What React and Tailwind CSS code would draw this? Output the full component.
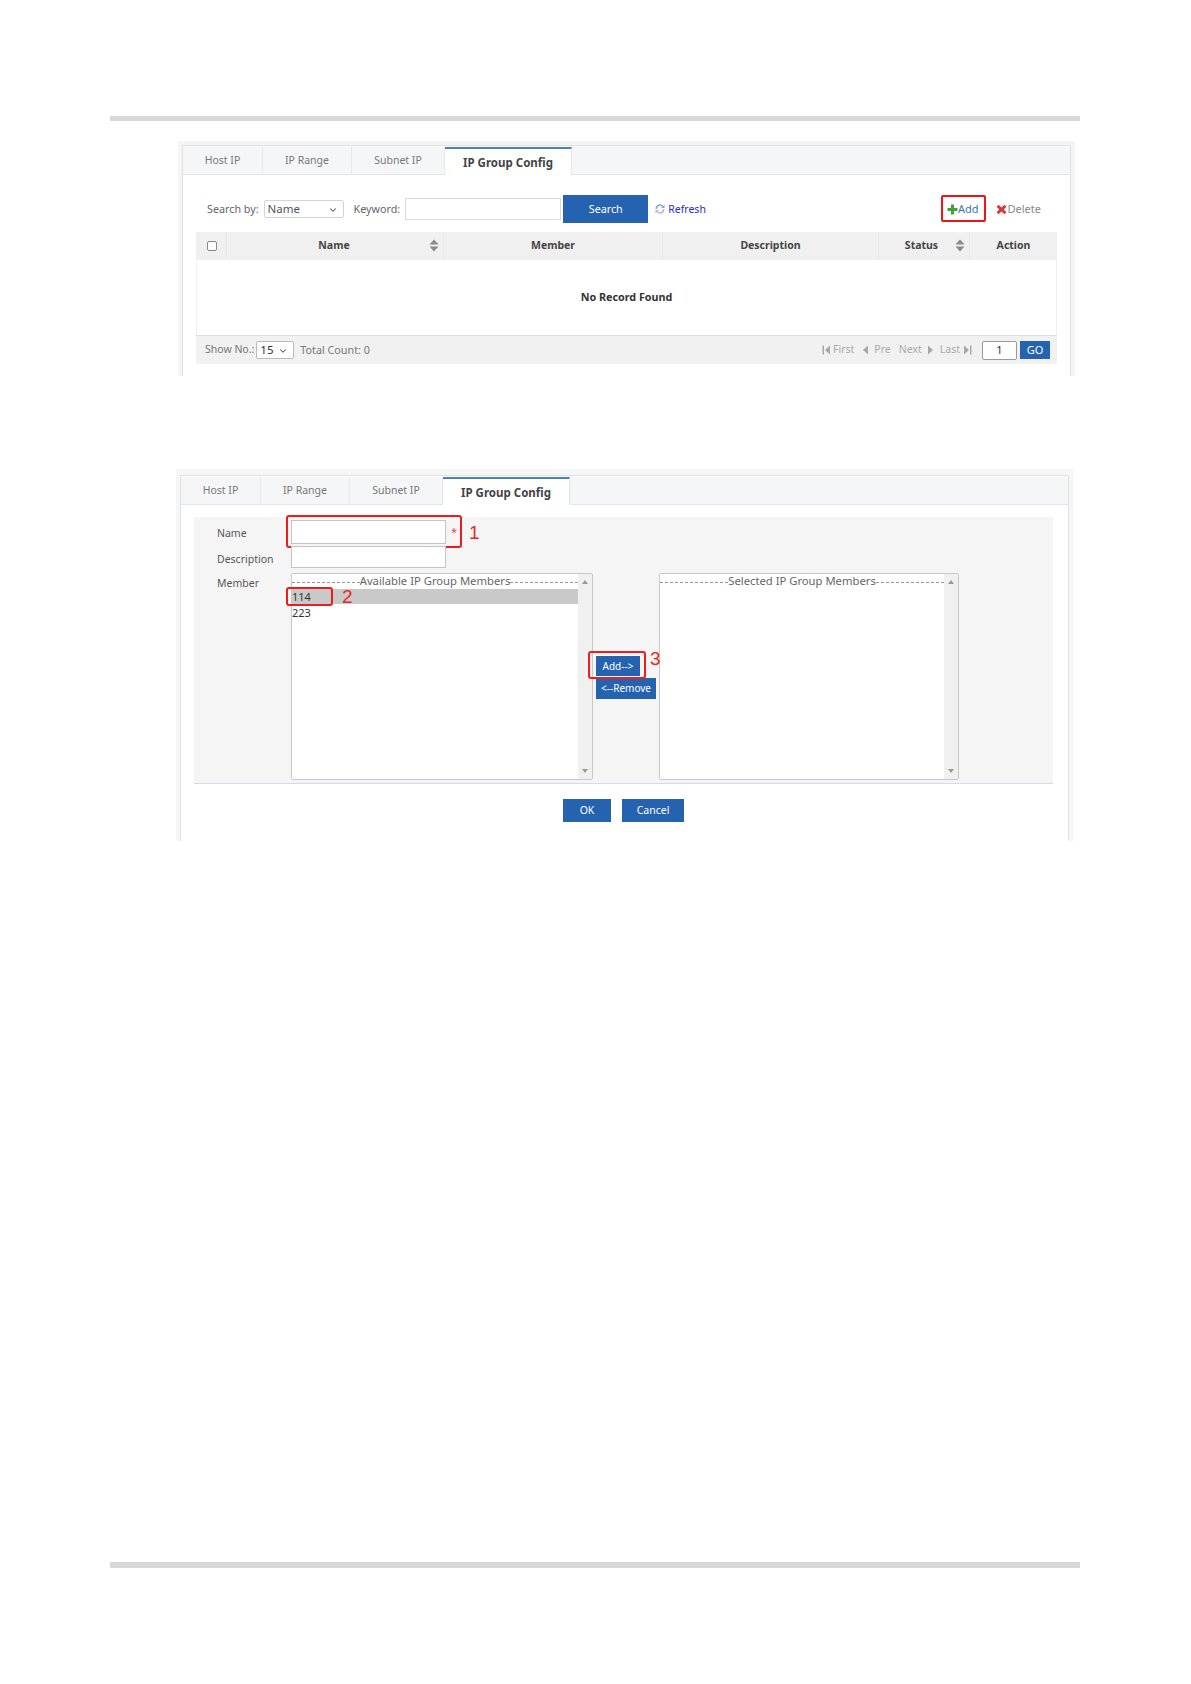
import { ChevronDown } from "lucide-react";

const font = { fontFamily: '"Noto Sans", "Open Sans", sans-serif' };

function Tabs() {
  const tabs = [
    { label: "Host IP", w: "w-[80px]" },
    { label: "IP Range", w: "w-[89px]" },
    { label: "Subnet IP", w: "w-[93px]" },
  ];
  return (
    <div className="flex h-[28px] border-b border-[#e3e6e8] bg-[#f5f6f7]">
      {tabs.map((t) => (
        <div key={t.label} className={`${t.w} flex h-[27px] items-center justify-center border-r border-[#e6e8ea] pt-[1px] text-[10.5px] text-[#777]`}>
          {t.label}
        </div>
      ))}
      <div className="flex h-[28px] w-[127px] items-center justify-center border-r border-t-2 border-[#e3e6e8] border-t-[#4a80c4] bg-white pt-[2px] text-[11.5px] font-bold text-[#444]">
        IP Group Config
      </div>
    </div>
  );
}

function SortIcon() {
  return (
    <svg width="10" height="13" viewBox="0 0 10 13" className="shrink-0">
      <path d="M5 0.5 9.5 5.5H0.5Z M0.5 7.5H9.5L5 12.5Z" fill="#8a8a8a" />
    </svg>
  );
}

function Header({ w, sort, children }) {
  return (
    <div className={`${w} relative flex h-full items-center justify-center border-r border-[#e8e8e8] text-[10.5px] font-bold text-[#444]`}>
      {children}
      {sort && <div className="absolute right-[4px] top-[7px]"><SortIcon /></div>}
    </div>
  );
}

function PagerIcon({ d }) {
  return (
    <svg width="9" height="10" viewBox="0 0 9 10" className="shrink-0">
      <path d={d} fill="#a8a8a8" />
    </svg>
  );
}

function Dropdown({ value, w, border, color, pl }) {
  return (
    <div className={`${w} ${border} ${color} ${pl} relative flex h-[18px] items-center rounded-[2px] border bg-white text-[11.5px]`}>
      {value}
      <ChevronDown size={10} strokeWidth={2.5} className="absolute right-[5px] top-[4px] text-[#555]" />
    </div>
  );
}

function GroupTable() {
  return (
    <div className="mx-[13px] mt-[27px] w-[861px]">
      <div className="flex h-[28px] bg-[#f0f0f0]">
        <div className="flex h-full w-[31px] items-center border-r border-[#e8e8e8] pl-[11px]">
          <div className="h-[10px] w-[10px] rounded-[2px] border border-[#888] bg-white" />
        </div>
        <Header w="w-[217px]" sort><span className="pr-[2px]">Name</span></Header>
        <Header w="w-[219px]">Member</Header>
        <Header w="w-[216px]">Description</Header>
        <Header w="w-[91px]" sort><span className="pr-[5px]">Status</span></Header>
        <div className="flex h-full w-[87px] items-center justify-center text-[10.5px] font-bold text-[#444]">Action</div>
      </div>
      <div className="flex h-[75px] items-center justify-center border-x border-[#f0f0f0] text-[10.75px] font-bold text-[#333]">
        No Record Found
      </div>
      <div className="flex h-[29px] items-center border-t border-[#dcdcdc] bg-[#f1f1f1] pl-[9px] pr-[7px] text-[10.5px] text-[#777]">
        <span>Show No.:</span>
        <div className="ml-[2px]">
          <Dropdown value="15" w="w-[38px]" border="border-[#bbb]" color="text-[#333]" pl="pl-[3px]" />
        </div>
        <span className="ml-[6px] text-[10.75px]">Total Count: 0</span>
        <div className="ml-auto flex items-center text-[#aaa]">
          <PagerIcon d="M0.5 0.5H2V9.5H0.5Z M8 0.5V9.5L3 5Z" />
          <span className="ml-[2px]">First</span>
          <span className="ml-[7px]"><PagerIcon d="M7 0.5V9.5L2 5Z" /></span>
          <span className="ml-[4px]">Pre</span>
          <span className="ml-[8px]">Next</span>
          <span className="ml-[4px]"><PagerIcon d="M2 0.5V9.5L7 5Z" /></span>
          <span className="ml-[5px]">Last</span>
          <span className="ml-[3px]"><PagerIcon d="M1 0.5V9.5L6 5Z M7 0.5H8.5V9.5H7Z" /></span>
        </div>
        <div className="ml-[10px] flex h-[19px] w-[35px] items-center justify-center rounded-[2px] border border-[#999] bg-white text-[11px] text-[#333]">1</div>
        <div className="ml-[3px] flex h-[18px] w-[30px] items-center justify-center bg-[#2563b0] text-[11px] text-white">GO</div>
      </div>
    </div>
  );
}

function ListTable() {
  return (
    <div className="h-[235px] bg-[#f5f5f5] px-[4px] pt-[4px]" style={{ marginLeft: 178, width: 897 }}>
      <div className="h-full border-x border-t border-[#dfe1e3] bg-white pt-[1px]">
        <Tabs />
        <div className="relative flex h-[0px] items-start text-[10.75px] text-[#666]">
          <div className="mt-[20px] flex h-[28px] w-full items-center pl-[24px]">
            <span>Search by:</span>
            <div className="ml-[5px]">
              <Dropdown value="Name" w="w-[80px]" border="border-[#d4d4d4]" color="text-[#555]" pl="pl-[3px]" />
            </div>
            <span className="ml-[10px]">Keyword:</span>
            <div className="ml-[5px] h-[22px] w-[156px] border border-[#d9d9d9] bg-white" />
            <div className="ml-[2px] flex h-[28px] w-[85px] items-center justify-center bg-[#2563b0] text-white">Search</div>
            <svg width="12" height="12" viewBox="0 0 12 12" className="ml-[6px]">
              <path d="M1.5 6A4.5 4.5 0 0 1 9.5 3L10.5 1.5V5H7L8.5 3.8A3.2 3.2 0 0 0 3 6Z" fill="#7fa8d8" />
              <path d="M10.5 6A4.5 4.5 0 0 1 2.5 9L1.5 10.5V7H5L3.5 8.2A3.2 3.2 0 0 0 9 6Z" fill="#b4bcd4" />
            </svg>
            <span className="ml-[2px] mt-[1px] text-[10.5px] text-[#2a2ad0]">Refresh</span>
            <div className="relative ml-[241px] flex items-center text-[11px] text-[#3a72b8]">
              <div className="absolute -left-[6px] -top-[6px] h-[27px] w-[45px] rounded-[2px] border-2 border-[#f01414]" />
              <svg width="11" height="11" viewBox="0 0 11 11">
                <path d="M4 0.5H7V4H10.5V7H7V10.5H4V7H0.5V4H4Z" fill="#3ea33c" />
              </svg>
              <span>Add</span>
            </div>
            <div className="ml-[18px] mt-[1px] flex items-center text-[11px] text-[#888]">
              <svg width="11" height="11" viewBox="0 0 11 11">
                <path d="M2.5 0.8 5.5 3.4 8.5 0.8 10.4 2.8 7.7 5.5 10.4 8.2 8.5 10.2 5.5 7.6 2.5 10.2 0.6 8.2 3.3 5.5 0.6 2.8Z" fill="#d23a3a" />
              </svg>
              <span>Delete</span>
            </div>
          </div>
        </div>
        <div className="pt-[30px]">
          <GroupTable />
        </div>
      </div>
    </div>
  );
}

function ArrowUp() {
  return <div className="h-0 w-0 border-x-[3px] border-b-[4px] border-x-transparent border-b-[#999]" />;
}

function ArrowDown() {
  return <div className="h-0 w-0 border-x-[3px] border-t-[4px] border-x-transparent border-t-[#999]" />;
}

function MemberList({ title, width, items }) {
  return (
    <div className={`${width} flex h-[207px] rounded-[2px] border border-[#c8c8c8] bg-white`}>
      <div className="min-w-0 flex-1 text-[11px] text-[#333]">
        <div className="flex h-[15px] items-center whitespace-nowrap text-[#666]">
          <div className="mt-[1px] flex-1 border-t border-dashed border-[#999]" />
          <span className="text-[11.25px]">{title}</span>
          <div className="mt-[1px] flex-1 border-t border-dashed border-[#999]" />
        </div>
        {items}
      </div>
      <div className="flex w-[14px] flex-col items-center justify-between bg-[#f0f0f0] py-[6px]">
        <ArrowUp />
        <ArrowDown />
      </div>
    </div>
  );
}

function RedBox({ className }) {
  return <div className={`absolute rounded-[3px] border-2 border-[#ee1c1c] ${className}`} />;
}

function Note({ className, children }) {
  return (
    <span className={`absolute text-[19px] leading-none text-[#e8281e] ${className}`} style={{ fontFamily: '"Liberation Sans", sans-serif' }}>
      {children}
    </span>
  );
}

function GroupForm() {
  return (
    <div className="h-[372px] bg-[#f6f6f6] px-[4px] pt-[6px]" style={{ marginLeft: 176, width: 897 }}>
      <div className="h-full border-x border-t border-[#dfe1e3] bg-white pt-[1px]">
        <Tabs />
        <div className="mx-[13px] mt-[12px] w-[859px] border-b border-[#d8dce2] bg-[#f5f5f5] pb-[3px] pl-[97px]">
          <div className="relative flex h-[27px] items-center pt-[3px]">
            <span className="absolute -left-[74px] top-[9px] text-[10.5px] text-[#555]">Name</span>
            <div className="h-[24px] w-[155px] border border-[#c4c4c4] bg-white" />
            <span className="ml-[5px] text-[11px] text-[#e8406a]">*</span>
            <RedBox className="-left-[5px] -top-[2px] h-[33px] w-[176px]" />
            <Note className="left-[178px] top-[6px]">1</Note>
          </div>
          <div className="relative mt-[2px] h-[22px] w-[155px] border border-[#c4c4c4] bg-white">
            <span className="absolute -left-[75px] top-[5px] whitespace-nowrap text-[10.5px] text-[#555]">Description</span>
          </div>
          <div className="relative mt-[5px] flex items-start">
            <span className="absolute -left-[74px] top-[3px] text-[10.5px] text-[#555]">Member</span>
            <div className="relative">
              <MemberList
                width="w-[302px]"
                title="Available IP Group Members"
                items={
                  <>
                    <div className="h-[15px] bg-[#c9c9c9] leading-[15px]">114</div>
                    <div className="h-[15px] leading-[17px]">223</div>
                  </>
                }
              />
              <RedBox className="-left-[5px] top-[14px] h-[19px] w-[47px]" />
              <Note className="left-[51px] top-[14px]">2</Note>
            </div>
            <div className="relative ml-[3px] mt-[83px] flex w-[60px] flex-col items-start gap-[2px] text-[10px] text-white">
              <div className="flex h-[20px] w-[44px] items-center justify-center bg-[#2563b0]">Add--&gt;</div>
              <div className="flex h-[21px] w-[60px] items-center justify-center bg-[#2563b0]">&lt;--Remove</div>
              <RedBox className="-left-[8px] -top-[5px] h-[28px] w-[58px]" />
              <Note className="left-[54px] -top-[7px]">3</Note>
            </div>
            <div className="ml-[3px]">
              <MemberList width="w-[300px]" title="Selected IP Group Members" items={null} />
            </div>
          </div>
        </div>
        <div className="mt-[15px] flex pl-[382px] text-[10.5px] text-white">
          <div className="flex h-[23px] w-[48px] items-center justify-center bg-[#2563b0]">OK</div>
          <div className="ml-[11px] flex h-[23px] w-[62px] items-center justify-center bg-[#2563b0]">Cancel</div>
        </div>
      </div>
    </div>
  );
}

export default function App() {
  return (
    <div className="h-[1684px] bg-white pt-[116px]" style={font}>
      <div className="ml-[110px] h-[5px] w-[970px] bg-[#d8d8d8]" />
      <div className="mt-[20px]">
        <ListTable />
      </div>
      <div className="mt-[93px]">
        <GroupForm />
      </div>
      <div className="ml-[110px] mt-[721px] h-[6px] w-[970px] bg-[#d8d8d8]" />
    </div>
  );
}
